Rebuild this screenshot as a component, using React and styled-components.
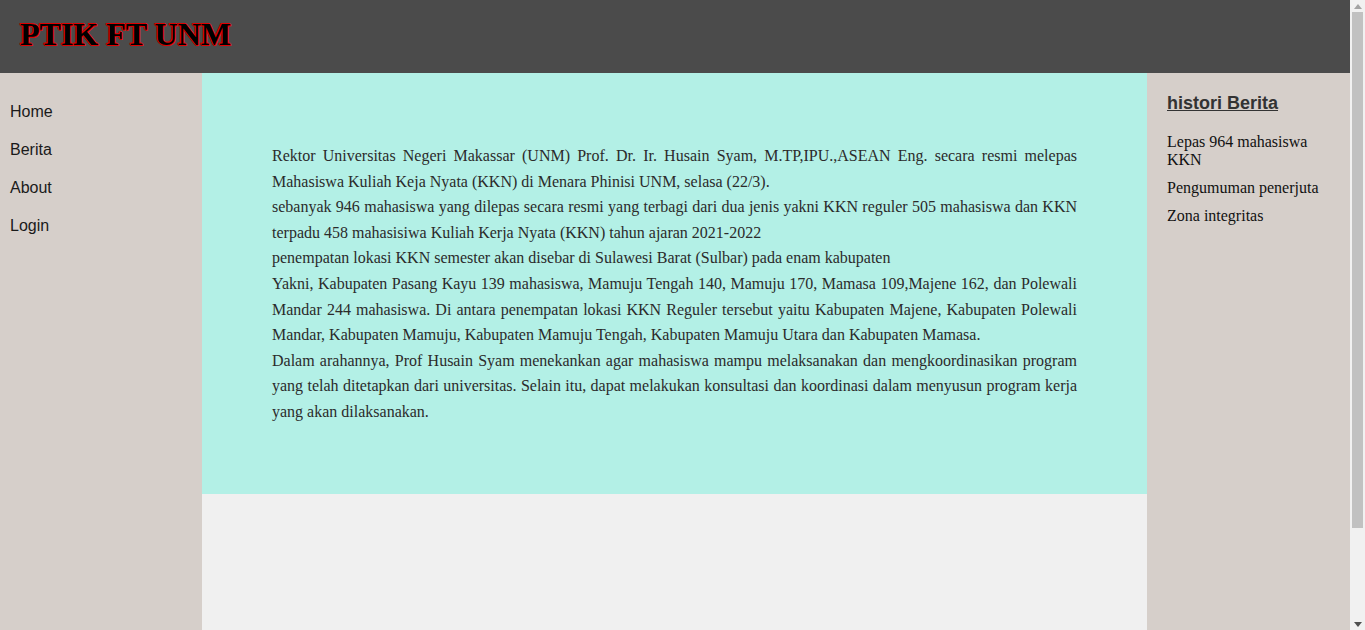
import React from 'react';
import styled, { createGlobalStyle } from 'styled-components';

const GlobalStyle = createGlobalStyle`
  html, body {
    margin: 0;
    padding: 0;
    background: #f0f0f0;
    overflow: hidden;
  }
`;

const Window = styled.div`
  display: flex;
  height: 100vh;
  overflow: hidden;
`;

const Page = styled.div`
  flex: 1;
  display: flex;
  flex-direction: column;
  min-height: 742px;
`;

/* imitation of the browser's vertical scrollbar seen in the screenshot */
const ScrollRail = styled.div`
  width: 15px;
  flex-shrink: 0;
  height: 100vh;
  background: #f1f1f1;
  display: flex;
  flex-direction: column;
`;

const ScrollButton = styled.div`
  height: 12px;
  display: flex;
  align-items: center;
  justify-content: center;
`;

const ScrollTrack = styled.div`
  flex: 1;
  padding: 0 2px;
`;

const ScrollThumb = styled.div`
  height: 516px;
  background: #c1c1c1;
`;

const Header = styled.header`
  height: 73px;
  background-color: #4b4b4b;
  display: flex;
  align-items: center;
  padding-left: 20px;
`;

const Title = styled.h1`
  margin: 0;
  margin-top: -5px;
  font-family: 'Liberation Serif', serif;
  font-size: 32px;
  font-weight: bold;
  color: #000;
  text-shadow: 1px 0 0 #e00000, -1px 0 0 #e00000, 0 1px 0 #e00000,
    0 -1px 0 #e00000, 1px 1px 0 #e00000, -1px -1px 0 #e00000;
`;

const Body = styled.div`
  flex: 1;
  display: flex;
`;

const SideNav = styled.nav`
  width: 202px;
  background-color: #d6cfca;
  padding-top: 20px;
  display: flex;
  flex-direction: column;
`;

const NavLink = styled.a`
  font-family: 'Liberation Sans', Arial, sans-serif;
  font-size: 16px;
  color: #1a1a1a;
  padding: 0 10px;
  line-height: 38px;
  text-decoration: none;
`;

const Main = styled.main`
  flex: 1;
  background-color: #f0f0f0;
`;

const Article = styled.article`
  background-color: #b3f0e6;
  padding: 70px;
  height: 421px;
  box-sizing: border-box;
`;

const Para = styled.p`
  margin: 0;
  font-family: 'Liberation Serif', 'Times New Roman', serif;
  font-size: 16px;
  line-height: 25.6px;
  color: #2b2b2b;
  text-align: justify;
`;

const Aside = styled.aside`
  width: 203px;
  background-color: #d6cfca;
  padding: 20px 20px 0 20px;
  box-sizing: border-box;
`;

const AsideTitle = styled.h3`
  margin: 0 0 19px 0;
  font-family: 'Liberation Sans', Arial, sans-serif;
  font-size: 18px;
  font-weight: bold;
  color: #333;
  text-decoration: underline;
`;

const AsideItem = styled.div`
  font-family: 'Liberation Serif', 'Times New Roman', serif;
  font-size: 16px;
  line-height: 17.5px;
  color: #111;
  margin-bottom: 10.5px;
`;

const paragraphs = [
  'Rektor Universitas Negeri Makassar (UNM) Prof. Dr. Ir. Husain Syam, M.TP,IPU.,ASEAN Eng. secara resmi melepas Mahasiswa Kuliah Keja Nyata (KKN) di Menara Phinisi UNM, selasa (22/3).',
  'sebanyak 946 mahasiswa yang dilepas secara resmi yang terbagi dari dua jenis yakni KKN reguler 505 mahasiswa dan KKN terpadu 458 mahasisiwa Kuliah Kerja Nyata (KKN) tahun ajaran 2021-2022',
  'penempatan lokasi KKN semester akan disebar di Sulawesi Barat (Sulbar) pada enam kabupaten',
  'Yakni, Kabupaten Pasang Kayu 139 mahasiswa, Mamuju Tengah 140, Mamuju 170, Mamasa 109,Majene 162, dan Polewali Mandar 244 mahasiswa. Di antara penempatan lokasi KKN Reguler tersebut yaitu Kabupaten Majene, Kabupaten Polewali Mandar, Kabupaten Mamuju, Kabupaten Mamuju Tengah, Kabupaten Mamuju Utara dan Kabupaten Mamasa.',
  'Dalam arahannya, Prof Husain Syam menekankan agar mahasiswa mampu melaksanakan dan mengkoordinasikan program yang telah ditetapkan dari universitas. Selain itu, dapat melakukan konsultasi dan koordinasi dalam menyusun program kerja yang akan dilaksanakan.',
];

const menu = ['Home', 'Berita', 'About', 'Login'];
const history = ['Lepas 964 mahasiswa KKN', 'Pengumuman penerjuta', 'Zona integritas'];

export default function App() {
  return (
    <>
      <GlobalStyle />
      <Window>
        <Page>
          <Header>
            <Title>PTIK FT UNM</Title>
          </Header>
          <Body>
            <SideNav>
              {menu.map((m) => (
                <NavLink key={m}>{m}</NavLink>
              ))}
            </SideNav>
            <Main>
              <Article>
                {paragraphs.map((p, i) => (
                  <Para key={i}>{p}</Para>
                ))}
              </Article>
            </Main>
            <Aside>
              <AsideTitle>histori Berita</AsideTitle>
              {history.map((h) => (
                <AsideItem key={h}>{h}</AsideItem>
              ))}
            </Aside>
          </Body>
        </Page>
        <ScrollRail>
          <ScrollButton>
            <svg width="8" height="5" viewBox="0 0 8 5">
              <polygon points="0,5 8,5 4,0" fill="#a3a3a3" />
            </svg>
          </ScrollButton>
          <ScrollTrack>
            <ScrollThumb />
          </ScrollTrack>
          <ScrollButton>
            <svg width="8" height="5" viewBox="0 0 8 5">
              <polygon points="0,0 8,0 4,5" fill="#505050" />
            </svg>
          </ScrollButton>
        </ScrollRail>
      </Window>
    </>
  );
}
